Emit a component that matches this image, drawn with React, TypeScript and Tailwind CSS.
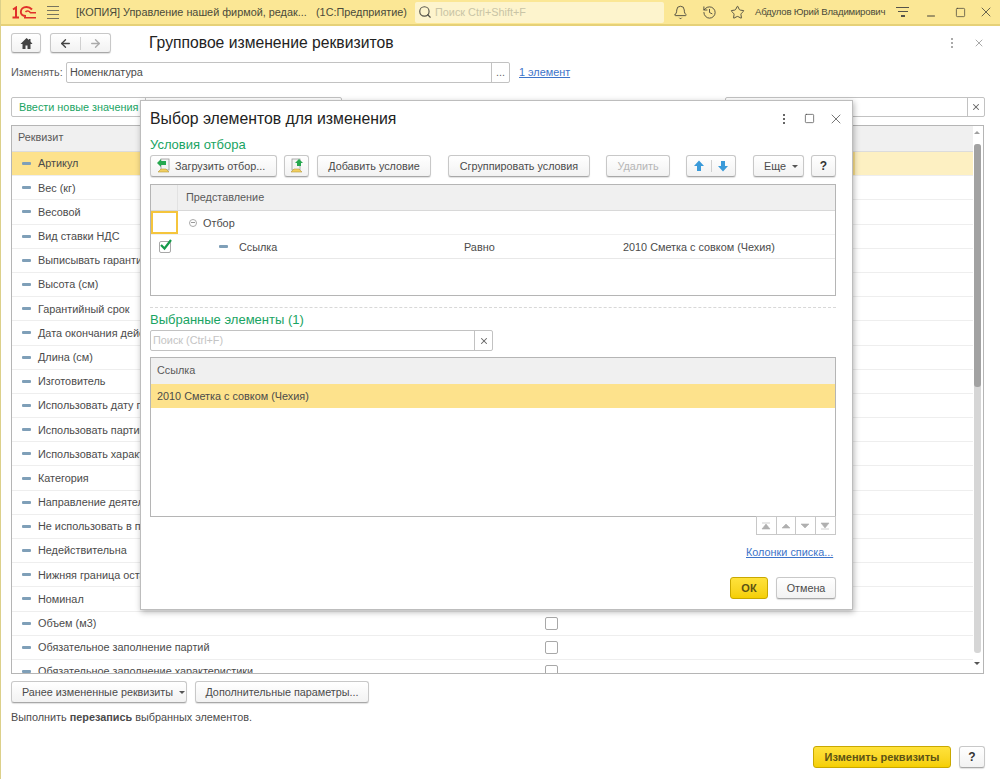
import React from 'react';
import { ArrowLeft, ArrowRight, Search, Bell, History, Star, X, Square, Minus } from 'lucide-react';

const mainRows = [
  'Артикул', 'Вес (кг)', 'Весовой', 'Вид ставки НДС', 'Выписывать гарантийные талоны', 'Высота (см)',
  'Гарантийный срок', 'Дата окончания действия', 'Длина (см)', 'Изготовитель', 'Использовать дату производства',
  'Использовать партии', 'Использовать характеристики', 'Категория', 'Направление деятельности',
  'Не использовать в продаже', 'Недействительна', 'Нижняя граница остатка', 'Номинал', 'Объем (м3)',
  'Обязательное заполнение партий', 'Обязательное заполнение характеристики',
];
const checkRows = ['Объем (м3)', 'Обязательное заполнение партий', 'Обязательное заполнение характеристики'];

const Dash = () => <span className="block w-[9px] h-[3px] rounded-[1px] bg-[#7f9fb8] shrink-0" />;

const Btn = ({ className = '', children }: { className?: string; children: React.ReactNode }) => (
  <div className={`h-[22px] flex items-center justify-center rounded-[3px] border border-[#c8c8c8] border-b-[#a8a8a8] bg-gradient-to-b from-white to-[#f2f2f2] shadow-[0_1px_1px_rgba(0,0,0,0.12)] text-[10.800px] text-[#4b4b4b] shrink-0 ${className}`}>
    {children}
  </div>
);

const Caret = () => <span className="inline-block ml-[6px] w-0 h-0 border-x-[3px] border-x-transparent border-t-[3px] border-t-[#555]" />;

const Dots = ({ color }: { color: string }) => (
  <svg width="4" height="12" viewBox="0 0 4 12">
    <rect x="1" y="1" width="2" height="2" fill={color} />
    <rect x="1" y="5" width="2" height="2" fill={color} />
    <rect x="1" y="9" width="2" height="2" fill={color} />
  </svg>
);

const Logo = () => (
  <svg width="24" height="13" viewBox="0 0 24 13" fill="none" stroke="#e0302a">
    <path d="M1 3.500l3-2V12M.5 11.500h6.500" strokeWidth="2" />
    <path d="M20 3.500C18.500 1.800 16.500 1 14.500 1C11 1 8.800 3.200 8.800 6C8.800 8.500 10.800 10 14 10" strokeWidth="1.900" />
    <path d="M13.500 6c.8-1.200 2.500-1.400 3.800-.5l1.200 1.200h5.500M12 11.800h12" strokeWidth="1.500" />
  </svg>
);

const HomeIcon = () => (
  <svg width="13" height="13" viewBox="0 0 13 13">
    <path d="M6.500 1L.5 7h2v5h3V8.500h2V12h3V7h2L10.500 4.500V2H9v1z" fill="#444" />
  </svg>
);

const LoadIcon = ({ flip }: { flip?: boolean }) => (
  <svg width="16" height="16" viewBox="0 0 16 16">
    <rect x={flip ? 3 : 5} y="1" width="8" height="11" fill="#f4f4f4" stroke="#9a9a9a" strokeWidth="0.800" />
    <path d="M2 14l3-3h5l3 3z" fill="#f2cf60" stroke="#b79a3a" strokeWidth="0.600" />
    {flip
      ? <path d="M8 8V5H6l4-4 4 4h-2v3z" fill="#27a84f" />
      : <path d="M1 5l4-4v2h5v4H5v2z" fill="#27a84f" />}
  </svg>
);

const UpDown = ({ down }: { down?: boolean }) => (
  <svg width="12" height="12" viewBox="0 0 12 12">
    <path d={down ? 'M4 1h4v5h3l-5 5.500L1 6h3z' : 'M4 11h4V6h3L6 .5 1 6h3z'} fill="#3a9ad9" />
  </svg>
);

const TopBar = () => (
  <div className="h-[26px] shrink-0 flex items-center bg-[#fbe795] border-b-2 border-[#e6d178] text-[10.850px] text-[#4a4a3a]">
    <div className="ml-[11px] flex"><Logo /></div>
    <div className="ml-[11px] flex flex-col gap-[3px] w-[12px] shrink-0">
      <span className="h-px bg-[#77745f]" /><span className="h-px bg-[#77745f]" /><span className="h-px bg-[#77745f]" /><span className="h-px bg-[#77745f]" />
    </div>
    <span className="ml-[17px] w-[240px] whitespace-nowrap shrink-0">[КОПИЯ] Управление нашей фирмой, редак...</span>
    <span className="w-[93px] whitespace-nowrap shrink-0">(1С:Предприятие)</span>
    <div className="ml-[6px] w-[249px] h-[21px] rounded-[2px] bg-[#fdf4cd] flex items-center pl-[3px] text-[#c9c4a6] shrink-0">
      <Search size={14} className="text-[#55534a]" />
      <span className="ml-[3px]">Поиск Ctrl+Shift+F</span>
    </div>
    <Bell size={15} strokeWidth={1.400} className="ml-[9px] text-[#44423a] shrink-0" />
    <History size={15} strokeWidth={1.400} className="ml-[14px] text-[#44423a] shrink-0" />
    <Star size={15} strokeWidth={1.400} className="ml-[13px] text-[#44423a] shrink-0" />
    <span className="ml-[10px] w-[134px] whitespace-nowrap text-[9.600px] tracking-[-0.200px] shrink-0">Абдулов Юрий Владимирович</span>
    <div className="ml-[7px] flex flex-col items-center gap-[3px] w-[13px] shrink-0">
      <span className="h-px w-[13px] bg-[#55534a]" /><span className="h-px w-[10px] bg-[#55534a]" /><span className="h-[2px] w-[4px] bg-[#55534a]" />
    </div>
    <Minus size={12} className="ml-[16px] mt-[8px] text-[#44423a] shrink-0" />
    <Square size={11} strokeWidth={1.600} className="ml-[18px] text-[#44423a] shrink-0" />
    <X size={16} strokeWidth={1.200} className="ml-[12px] text-[#44423a] shrink-0" />
  </div>
);

const MainTable = () => (
  <div className="relative mt-[8px] ml-[11px] w-[973px] h-[549px] border border-[#b5b5b5] overflow-hidden bg-white text-[10.850px] text-[#4b4b4b]">
    <div className="h-[26px] w-[961px] bg-[#f0f0f0] border-b border-[#dcdcdc] flex items-center pl-[6px] pb-[2px] text-[#5a5a5a]">Реквизит</div>
    {mainRows.map((r, i) => (
      <div key={r} className="h-[24.200px] w-[961px] flex items-center border-b border-[#eeeeee] shrink-0">
        <div className={`h-full w-[843px] flex items-center pl-[10px] gap-[7px] whitespace-nowrap ${i === 0 ? 'bg-[#fde28c]' : ''}`}>
          <Dash />
          <span>{r}</span>
        </div>
        <div className={`h-full flex-1 ${i === 0 ? 'bg-[#fdf0c2]' : ''}`} />
        {checkRows.includes(r) && <span className="absolute left-[533px] w-[13px] h-[13px] rounded-[2px] border border-[#a8a8a8] bg-white" />}
      </div>
    ))}
    {/* scrollbar */}
    <div className="absolute right-[3px] top-[5px] w-0 h-0 border-x-[3px] border-x-transparent border-b-[3px] border-b-[#a0a0a0]" />
    <div className="absolute right-[2px] top-[18px] w-[7px] h-[509px] rounded-[3px] bg-[#d6d6d6]">
      <div className="h-[243px] rounded-[3px] bg-[#a2a2a2]" />
    </div>
    <div className="absolute right-[3px] bottom-[8px] w-0 h-0 border-x-[3px] border-x-transparent border-t-[3px] border-t-[#555]" />
  </div>
);

const FilterTable = () => (
  <div className="mt-[7px] w-[686px] h-[112px] border border-[#b5b5b5] text-[10.850px] text-[#4b4b4b] bg-white">
    <div className="h-[26px] flex bg-[#f0f0f0] border-b border-[#d8d8d8]">
      <div className="w-[27px] border-r border-[#e2e2e2]" />
      <div className="pl-[8px] flex items-center text-[#5a5a5a]">Представление</div>
    </div>
    <div className="h-[24px] flex items-center border-b border-[#f0f0f0]">
      <div className="w-[27px] h-[23px] border-2 border-[#f5c53c] bg-white shrink-0" />
      <span className="ml-[11px] w-[8px] h-[8px] rounded-full border border-[#aaa] flex items-center justify-center">
        <span className="w-[4px] h-px bg-[#999]" />
      </span>
      <span className="ml-[6px] pt-[2px]">Отбор</span>
    </div>
    <div className="h-[24px] flex items-center border-b border-[#e8e8e8]">
      <div className="relative ml-[8px] w-[12px] h-[12px] rounded-[2px] border border-[#a8a8a8] shrink-0">
        <svg width="14" height="13" viewBox="0 0 14 13" className="absolute left-[-1px] top-[-4px]">
          <path d="M2 7l3.500 3.500L12 2" fill="none" stroke="#149a4a" strokeWidth="2.200" />
        </svg>
      </div>
      <div className="ml-[48px]"><Dash /></div>
      <span className="ml-[11px] w-[225px] pt-[2px]">Ссылка</span>
      <span className="w-[159px] pt-[2px]">Равно</span>
      <span className="pt-[2px]">2010 Сметка с совком (Чехия)</span>
    </div>
  </div>
);

const ItemsTable = () => (
  <div className="mt-[6px] w-[686px] h-[160px] border border-[#b5b5b5] text-[10.850px] text-[#4b4b4b] bg-white">
    <div className="h-[26px] bg-[#f0f0f0] flex items-center pl-[6px] pb-[2px] text-[#5a5a5a]">Ссылка</div>
    <div className="h-[24px] bg-[#fde28c] flex items-center pl-[6px]">2010 Сметка с совком (Чехия)</div>
  </div>
);

const navShapes = [
  'M1 8l4-5 4 5zM1 2h8',
  'M1 7l4-4 4 4z',
  'M1 3l4 4 4-4z',
  'M1 2l4 5 4-5zM1 8h8',
];

const Dialog = () => (
  <div className="absolute left-[139px] top-[100px] w-[713px] h-[510px] bg-white border border-[#bdbdbd] shadow-[1px_2px_6px_rgba(0,0,0,0.3)] flex flex-col pl-[9px]">
    <div className="h-[35px] flex items-center shrink-0">
      <span className="text-[15.800px] text-[#222]">Выбор элементов для изменения</span>
      <div className="ml-auto flex items-center mr-[8px]">
        <Dots color="#666" />
        <Square size={11} strokeWidth={1.500} className="ml-[18px] text-[#444]" />
        <X size={16} strokeWidth={1.100} className="ml-[13px] text-[#444]" />
      </div>
    </div>
    <div className="h-[18px] text-[13px] leading-[18px] text-[#19a463]">Условия отбора</div>
    <div className="mt-[1px] flex items-center">
      <Btn className="w-[127px] !justify-start pl-[5px]"><LoadIcon /><span className="ml-[3px]">Загрузить отбор...</span></Btn>
      <Btn className="ml-[7px] w-[25px]"><LoadIcon flip /></Btn>
      <Btn className="ml-[8px] w-[114px]">Добавить условие</Btn>
      <Btn className="ml-[17px] w-[142px]">Сгруппировать условия</Btn>
      <Btn className="ml-[16px] w-[64px] !text-[#b5b5b5]">Удалить</Btn>
      <Btn className="ml-[16px] w-[50px]">
        <span className="w-[25px] flex justify-center border-r border-[#d0d0d0]"><UpDown /></span>
        <span className="w-[24px] flex justify-center"><UpDown down /></span>
      </Btn>
      <Btn className="ml-[17px] w-[51px] !justify-start pl-[10px]">Еще<Caret /></Btn>
      <Btn className="ml-[7px] w-[25px] font-bold !text-[#333] !text-[12px]">?</Btn>
    </div>
    <FilterTable />
    <div className="mt-[11px] w-[686px] border-t border-dashed border-[#d8d8d8]" />
    <div className="mt-[3px] h-[18px] text-[13px] leading-[18px] text-[#19a463]">Выбранные элементы (1)</div>
    <div className="mt-[1px] w-[343px] h-[21px] flex border border-[#c2c2c2] rounded-[2px] text-[10.850px] text-[#c4c4c4]">
      <div className="flex-1 pl-[2px] flex items-center">Поиск (Ctrl+F)</div>
      <div className="w-[18px] border-l border-[#c2c2c2] flex items-center justify-center">
        <X size={10} strokeWidth={2.500} className="text-[#666]" />
      </div>
    </div>
    <ItemsTable />
    <div className="self-start ml-[606px] mt-[-1px] flex border border-[#c8c8c8]">
      {navShapes.map((d, i) => (
        <div key={d} className={`w-[19.500px] h-[17px] flex items-center justify-center ${i < 3 ? 'border-r border-[#c8c8c8]' : ''}`}>
          <svg width="10" height="10" viewBox="0 0 10 10"><path d={d} fill="#b0b0b0" stroke="#b0b0b0" strokeWidth="0.600" /></svg>
        </div>
      ))}
    </div>
    <div className="mt-[9px] ml-[596px] text-[10.850px] text-[#3d74c9] underline whitespace-nowrap h-[17px]">Колонки списка...</div>
    <div className="mt-[16px] ml-[580px] flex">
      <div className="w-[38px] h-[22px] rounded-[3px] border border-[#c9a800] bg-gradient-to-b from-[#ffe23a] to-[#f5cf00] flex items-center justify-center text-[11px] font-bold text-[#5d5314]">ОК</div>
      <Btn className="ml-[8px] w-[60px]">Отмена</Btn>
    </div>
  </div>
);

export default function App() {
  return (
    <div className="relative w-[1000px] h-[779px] overflow-hidden bg-white border-l border-[#dcd08a] flex flex-col font-['Liberation_Sans',Arial,sans-serif]">
      <TopBar />
      <div className="flex flex-col -ml-px">
        <div className="mt-[7px] ml-[11px] flex items-center h-[20px]">
          <Btn className="w-[30px] !h-[20px]"><HomeIcon /></Btn>
          <Btn className="ml-[9px] w-[61px] !h-[20px]">
            <span className="w-[31px] flex justify-center border-r border-[#d0d0d0]"><ArrowLeft size={13} strokeWidth={2.500} className="text-[#444]" /></span>
            <span className="w-[29px] flex justify-center"><ArrowRight size={13} strokeWidth={2.500} className="text-[#aaa]" /></span>
          </Btn>
          <span className="ml-[38px] text-[15.700px] text-[#222]">Групповое изменение реквизитов</span>
          <div className="ml-auto flex items-center mr-[15px]">
            <Dots color="#aaa" />
            <X size={12} strokeWidth={2} className="ml-[19px] text-[#aaa]" />
          </div>
        </div>
        <div className="mt-[8px] ml-[11px] flex items-center h-[22px] text-[10.850px] text-[#4b4b4b]">
          <span className="w-[55px] text-[#5a5a5a]">Изменять:</span>
          <div className="w-[444px] h-[21px] border border-[#c2c2c2] rounded-[2px] flex items-center">
            <span className="flex-1 pl-[3px]">Номенклатура</span>
            <span className="w-[18px] h-full border-l border-[#c2c2c2] flex items-center justify-center text-[#666]">...</span>
          </div>
          <span className="ml-[9px] text-[#3d74c9] underline">1 элемент</span>
        </div>
        <div className="mt-[14px] ml-[11px] flex h-[20px] text-[10.850px]">
          <div className="w-[331px] border border-[#c2c2c2] rounded-[2px] flex items-center">
            <div className="w-[134px] h-full border-r border-[#c2c2c2] flex items-center pl-[7px] text-[#19a463] whitespace-nowrap">Ввести новые значения</div>
          </div>
          <div className="ml-[383px] w-[260px] border border-[#c2c2c2] rounded-[2px] flex justify-end">
            <div className="w-[17px] border-l border-[#c2c2c2] flex items-center justify-center">
              <X size={10} strokeWidth={2.500} className="text-[#666]" />
            </div>
          </div>
        </div>
        <MainTable />
        <div className="mt-[7px] ml-[11px] flex items-center">
          <Btn className="w-[176px] !justify-start pl-[10px]">Ранее измененные реквизиты<Caret /></Btn>
          <Btn className="ml-[8px] w-[174px]">Дополнительные параметры...</Btn>
        </div>
        <div className="mt-[6px] ml-[11px] text-[10.850px] text-[#4b4b4b]">Выполнить <b>перезапись</b> выбранных элементов.</div>
        <div className="mt-[21px] ml-[813px] flex items-center">
          <div className="w-[138px] h-[22px] rounded-[3px] border border-[#c9a800] bg-gradient-to-b from-[#ffe23a] to-[#f5cf00] flex items-center justify-center text-[11px] font-bold text-[#5d5314]">Изменить реквизиты</div>
          <Btn className="ml-[8px] w-[26px] font-bold !text-[#333] !text-[12px]">?</Btn>
        </div>
      </div>
      <Dialog />
    </div>
  );
}
